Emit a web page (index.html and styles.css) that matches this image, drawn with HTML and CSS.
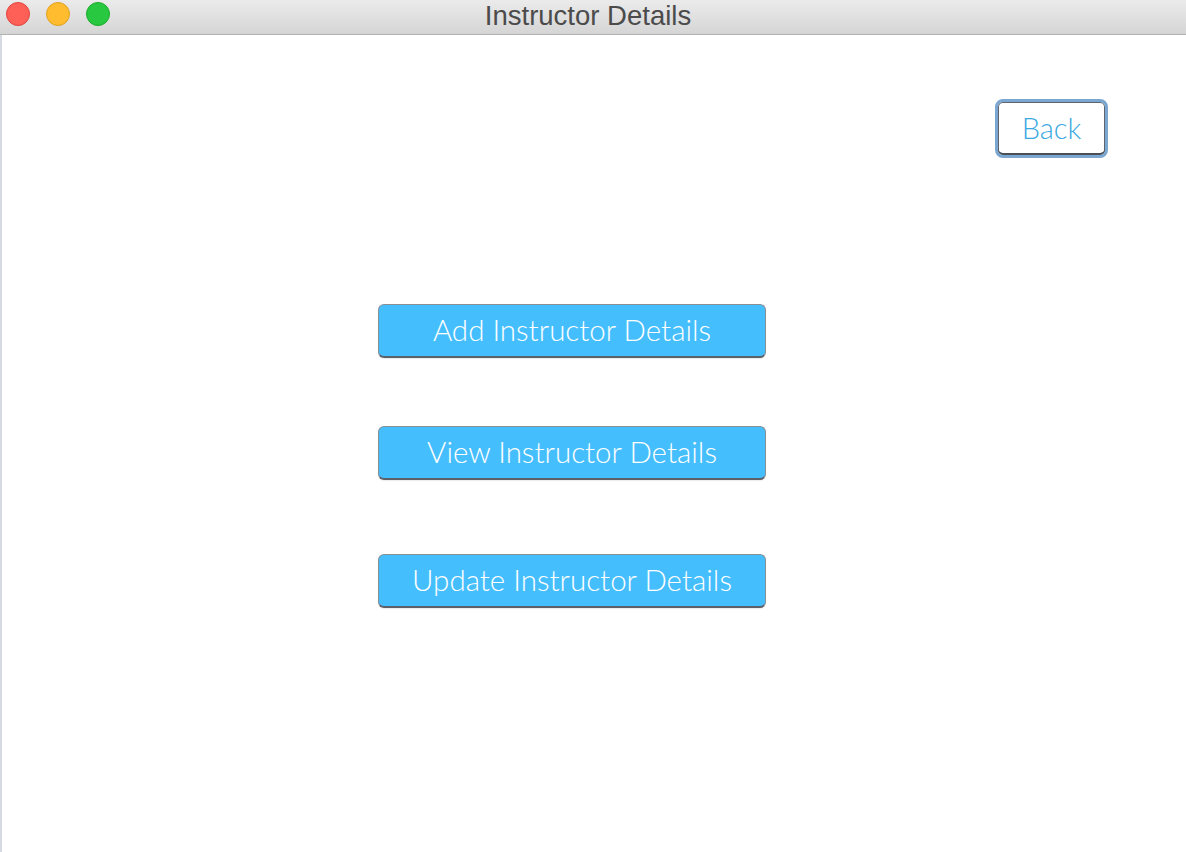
FILE: index.html
```html
<!DOCTYPE html>
<html>
<head>
<meta charset="utf-8">
<link rel="stylesheet" href="styles.css">
</head>
<body>
<div class="window">
  <div class="titlebar">
    <div class="lights">
      <span class="light red"></span>
      <span class="light yellow"></span>
      <span class="light green"></span>
    </div>
    <div class="title">Instructor Details</div>
  </div>
  <div class="content">
    <div class="topbar">
      <button class="back">Back</button>
    </div>
    <div class="menu">
      <button class="action first">Add Instructor Details</button>
      <button class="action second">View Instructor Details</button>
      <button class="action third">Update Instructor Details</button>
    </div>
  </div>
</div>
</body>
</html>
```
FILE: styles.css
```css
html, body {
  margin: 0;
  padding: 0;
  width: 1186px;
  height: 852px;
  overflow: hidden;
  background: #ffffff;
}
.window {
  display: flex;
  flex-direction: column;
  height: 852px;
}
.titlebar {
  height: 35px;
  box-sizing: border-box;
  background: linear-gradient(#ebebeb, #d5d5d5);
  border-bottom: 1px solid #b2b2b2;
  display: flex;
  align-items: center;
  justify-content: center;
  position: relative;
  flex: none;
}
.lights {
  position: absolute;
  left: 6px;
  top: 2px;
  display: flex;
  gap: 16px;
}
.light {
  width: 24px;
  height: 24px;
  border-radius: 50%;
  box-sizing: border-box;
  display: block;
}
.red { background: #fe5f57; border: 1px solid #e0443e; }
.yellow { background: #febc2e; border: 1px solid #dea123; }
.green { background: #28c840; border: 1px solid #1aab29; }
.title {
  font-family: "Liberation Sans", Arial, sans-serif;
  font-size: 27.5px;
  color: #4b4b4b;
  margin-top: -3px;
  margin-right: 10px;
}
.content {
  flex: 1;
  border-left: 2px solid #d6dbe2;
  display: flex;
  flex-direction: column;
}
.topbar {
  display: flex;
  justify-content: flex-end;
  padding: 64px 78px 0 0;
}
.back {
  width: 113px;
  height: 59px;
  box-sizing: border-box;
  background: #ffffff;
  border: 3px solid #7aa6d0;
  border-radius: 8px;
  box-shadow: inset 0 -2px 0 #4a4f57, inset 0 0 0 1px #5b6470;
  font-family: "Lato", sans-serif;
  font-weight: 300;
  font-size: 29px;
  color: #3aa8e2;
  padding: 0;
  padding-bottom: 2px;
}
.menu {
  display: flex;
  flex-direction: column;
  padding-left: 376px;
}
.action {
  width: 388px;
  height: 54px;
  box-sizing: border-box;
  background: #45befd;
  border: 1px solid #8a8f96;
  border-bottom: 2px solid #5c6068;
  border-radius: 6px;
  font-family: "Lato", sans-serif;
  font-weight: 300;
  font-size: 29.5px;
  color: #ffffff;
  padding: 0 0 2px 0;
  box-shadow: 0 1px 1px rgba(0,0,0,0.08);
}
.first { margin-top: 146px; }
.second { margin-top: 68px; }
.third { margin-top: 74px; }
```
